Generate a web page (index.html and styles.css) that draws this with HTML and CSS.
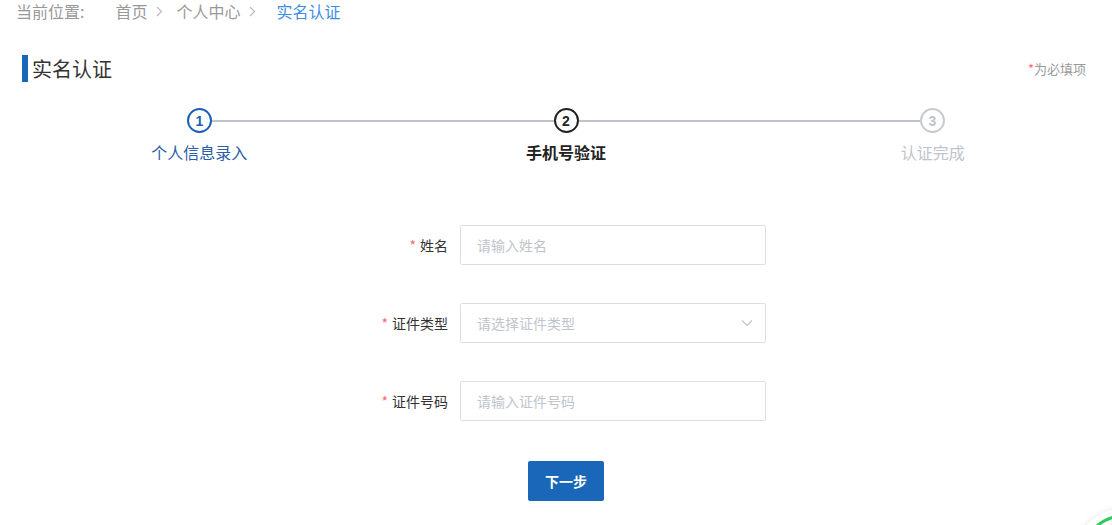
FILE: index.html
```html
<!DOCTYPE html>
<html lang="zh">
<head>
<meta charset="utf-8">
<title>实名认证</title>
<link rel="stylesheet" href="styles.css">
</head>
<body>
<div class="page">
  <div class="crumbs">
    <span class="crumb-label">当前位置:</span>
    <span class="crumb">首页</span>
    <svg class="sep" width="7" height="11" viewBox="0 0 7 11"><path d="M1 1 L5.5 5.5 L1 10" fill="none" stroke="#bbb" stroke-width="1.2"/></svg>
    <span class="crumb">个人中心</span>
    <svg class="sep" width="7" height="11" viewBox="0 0 7 11"><path d="M1 1 L5.5 5.5 L1 10" fill="none" stroke="#bbb" stroke-width="1.2"/></svg>
    <span class="crumb current">实名认证</span>
  </div>

  <div class="title-row">
    <h1 class="title">实名认证</h1>
    <span class="required-note"><span class="star">*</span>为必填项</span>
  </div>

  <div class="steps">
    <div class="track">
      <span class="dot done">1</span>
      <span class="line"></span>
      <span class="dot active">2</span>
      <span class="line"></span>
      <span class="dot todo">3</span>
    </div>
    <div class="labels">
      <span class="lbl done">个人信息录入</span>
      <span class="lbl active">手机号验证</span>
      <span class="lbl todo">认证完成</span>
    </div>
  </div>

  <form class="form">
    <div class="row">
      <label class="field-label"><span class="star">*</span>姓名</label>
      <div class="control"><input class="input" type="text" placeholder="请输入姓名"></div>
    </div>
    <div class="row">
      <label class="field-label"><span class="star">*</span>证件类型</label>
      <div class="control select">
        <span class="placeholder">请选择证件类型</span>
        <svg class="chev" width="12" height="8" viewBox="0 0 12 8"><path d="M1 1.5 L6 6.5 L11 1.5" fill="none" stroke="#c0c4cc" stroke-width="1.2"/></svg>
      </div>
    </div>
    <div class="row">
      <label class="field-label"><span class="star">*</span>证件号码</label>
      <div class="control"><input class="input" type="text" placeholder="请输入证件号码"></div>
    </div>
  </form>

  <div class="actions">
    <button class="btn" type="button">下一步</button>
  </div>
</div>
<div class="float-clip"><div class="float-widget"></div></div>
</body>
</html>
```

FILE: styles.css
```css
html, body {
  margin: 0;
  padding: 0;
  background: #fff;
  overflow: hidden;
}
body {
  font-family: "Noto Sans CJK SC", "Microsoft YaHei", sans-serif;
  color: #333;
  width: 1112px;
  height: 525px;
  position: relative;
}
.page {
  margin-left: 16px;
  width: 1100px;
}
.crumbs {
  display: flex;
  align-items: center;
  height: 22px;
  font-size: 16px;
  line-height: 22px;
  color: #999;
}
.crumb-label { margin-right: 29px; }
.crumb { margin-left: 2px; }
.sep {
  display: block;
  margin: 0 11px 0 9px;
}
.crumb.current { color: #3a8ee6; margin-left: 9px; }

.title-row {
  margin-top: 33px;
  display: flex;
  align-items: center;
  justify-content: space-between;
  height: 27px;
}
.title {
  margin: 0 0 0 6px;
  font-size: 20px;
  font-weight: normal;
  line-height: 27px;
  border-left: 6px solid #1a66b8;
  padding-left: 4px;
  color: #333;
}
.required-note {
  font-size: 13px;
  color: #999;
  margin-right: 30px;
}
.star { color: #f56c6c; }
.required-note .star { margin-left: -3px; }

.steps { margin-top: 26px; }
.track {
  display: flex;
  align-items: center;
  padding: 0 171px;
}
.dot {
  box-sizing: border-box;
  width: 25px;
  height: 25px;
  border-radius: 50%;
  border: 2px solid #c0c4cc;
  display: flex;
  align-items: center;
  justify-content: center;
  font-family: "Liberation Sans", sans-serif;
  font-weight: bold;
  font-size: 14px;
  flex: none;
}
.dot.done { border-color: #1d5fb5; color: #1d5fb5; }
.dot.active { border-color: #222; color: #222; }
.dot.todo { border-color: #c8cad2; color: #c0c4cc; }
.line {
  flex: 1;
  height: 2px;
  background: #c0c2cc;
}
.labels {
  margin-top: 8px;
  display: grid;
  grid-template-columns: 1fr 1fr 1fr;
  text-align: center;
  font-size: 16px;
  line-height: 22px;
}
.lbl.done { color: #2a5ea8; }
.lbl.active { color: #222; font-weight: bold; }
.lbl.todo { color: #c0c4cc; }

.form {
  margin: 62px 0 0 332px;
  display: flex;
  flex-direction: column;
  gap: 38px;
}
.row {
  display: flex;
  align-items: center;
  height: 40px;
}
.field-label {
  width: 112px;
  box-sizing: border-box;
  padding-right: 12px;
  text-align: right;
  font-size: 14px;
  color: #333;
}
.field-label .star { margin-right: 4px; }
.control {
  box-sizing: border-box;
  width: 306px;
  height: 40px;
  border: 1px solid #dcdfe6;
  border-radius: 2px;
}
.input {
  box-sizing: border-box;
  width: 100%;
  height: 100%;
  border: 0;
  outline: none;
  padding: 0 16px;
  font-family: inherit;
  font-size: 14px;
  color: #333;
  background: transparent;
}
.input::placeholder { color: #c0c4cc; }
.select {
  display: flex;
  align-items: center;
  justify-content: space-between;
  padding: 0 12px 0 16px;
}
.placeholder { font-size: 14px; color: #c0c4cc; }
.chev { display: block; }

.actions {
  margin-top: 40px;
  display: flex;
  justify-content: center;
}
.btn {
  width: 76px;
  height: 40px;
  border: 0;
  border-radius: 2px;
  background: #1a66b8;
  color: #fff;
  font-family: inherit;
  font-size: 14px;
  font-weight: bold;
}

.float-clip {
  position: absolute;
  left: 1052px;
  top: 490px;
  width: 60px;
  height: 35px;
  overflow: hidden;
}
.float-widget {
  position: absolute;
  left: 21px;
  top: 18px;
  width: 104px;
  height: 104px;
  border-radius: 50%;
  background: #fff;
  box-shadow: 0 0 6px rgba(0,0,0,0.10);
}
.float-widget::after {
  content: "";
  position: absolute;
  left: 6px;
  top: 6px;
  width: 88px;
  height: 88px;
  border-radius: 50%;
  border: 3px solid #2ecc5a;
}
```
